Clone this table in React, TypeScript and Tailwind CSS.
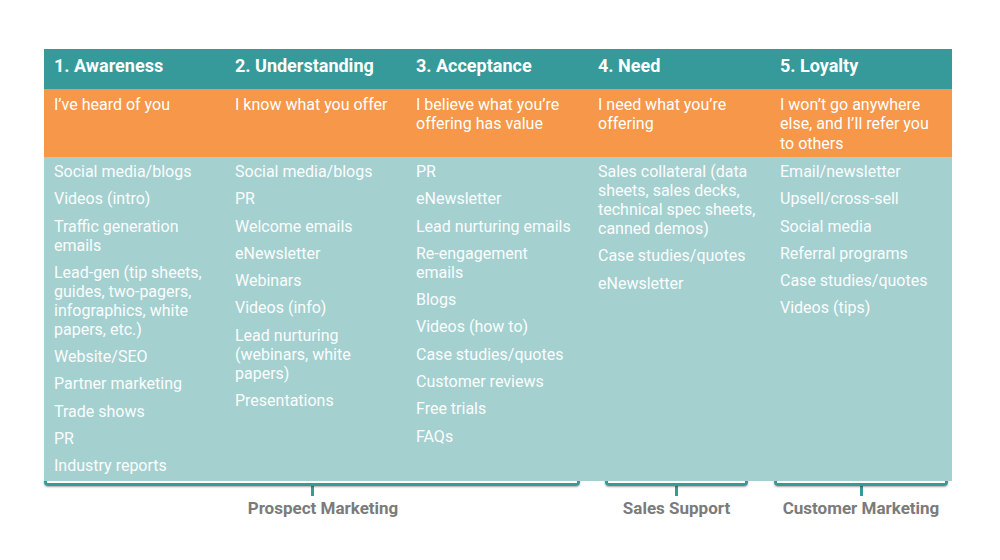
import React from "react";

const stages = [
  {
    title: "1. Awareness",
    feeling: "I’ve heard of you",
    items: [
      "Social media/blogs",
      "Videos (intro)",
      "Traffic generation emails",
      "Lead-gen (tip sheets, guides, two-pagers, infographics, white papers, etc.)",
      "Website/SEO",
      "Partner marketing",
      "Trade shows",
      "PR",
      "Industry reports",
    ],
  },
  {
    title: "2. Understanding",
    feeling: "I know what you offer",
    items: [
      "Social media/blogs",
      "PR",
      "Welcome emails",
      "eNewsletter",
      "Webinars",
      "Videos (info)",
      "Lead nurturing (webinars, white papers)",
      "Presentations",
    ],
  },
  {
    title: "3. Acceptance",
    feeling: "I believe what you’re offering has value",
    items: [
      "PR",
      "eNewsletter",
      "Lead nurturing emails",
      "Re-engagement emails",
      "Blogs",
      "Videos (how to)",
      "Case studies/quotes",
      "Customer reviews",
      "Free trials",
      "FAQs",
    ],
  },
  {
    title: "4. Need",
    feeling: "I need what you’re offering",
    items: [
      "Sales collateral (data sheets, sales decks, technical spec sheets, canned demos)",
      "Case studies/quotes",
      "eNewsletter",
    ],
  },
  {
    title: "5. Loyalty",
    feeling: "I won’t go anywhere else, and I’ll refer you to others",
    items: [
      "Email/newsletter",
      "Upsell/cross-sell",
      "Social media",
      "Referral programs",
      "Case studies/quotes",
      "Videos (tips)",
    ],
  },
];

const Bracket = ({ width, label, shift = 0 }: { width: number; label: string; shift?: number }) => (
  <div className="flex flex-col items-center" style={{ width }}>
    <div className="relative w-full h-[7px] -mt-[2px] border-[3px] border-t-0 border-[#369a99] rounded-b-[4px] shadow-[0_1px_2px_rgba(0,0,0,0.35)]" />
    <div className="w-[3px] h-[10px] bg-[#369a99]" />
    <div
      className="mt-[2px] text-[17px] leading-[20px] font-bold text-[#7b7b7b] whitespace-nowrap"
      style={{ marginLeft: shift }}
    >
      {label}
    </div>
  </div>
);

const cols = "grid grid-cols-[181px_181px_182px_182px_182px]";

export default function App() {
  return (
    <div className="w-[1000px] h-[560px] bg-white font-['Roboto',sans-serif] overflow-hidden">
      <div className="ml-[44px] pt-[49px] w-[908px]">
        <div className="relative z-10">
          <div className={`${cols} bg-[#359a99] h-[40px]`}>
            {stages.map((s) => (
              <div key={s.title} className="pl-[10px] pt-[6px] text-[18px] leading-[21px] font-bold text-white">
                {s.title}
              </div>
            ))}
          </div>
          <div className={`${cols} bg-[#f69749] h-[68px]`}>
            {stages.map((s) => (
              <div key={s.title} className="pl-[10px] pr-[12px] pt-[5.5px] text-[16px] leading-[19.5px] text-white">
                {s.feeling}
              </div>
            ))}
          </div>
          <div className={`${cols} bg-[#a4d0d0] pt-[5px] pb-[6px]`}>
            {stages.map((s) => (
              <div key={s.title} className="pl-[10px] pr-[14px] flex flex-col gap-[8.3px] text-[16px] leading-[19px] text-[#fbfdfd]">
                {s.items.map((it) => (
                  <div key={it}>{it}</div>
                ))}
              </div>
            ))}
          </div>
        </div>
        <div className="flex">
          <Bracket width={536} label="Prospect Marketing" shift={22} />
          <div className="w-[25px]" />
          <Bracket width={143} label="Sales Support" />
          <div className="w-[26px]" />
          <Bracket width={174} label="Customer Marketing" />
        </div>
      </div>
    </div>
  );
}
